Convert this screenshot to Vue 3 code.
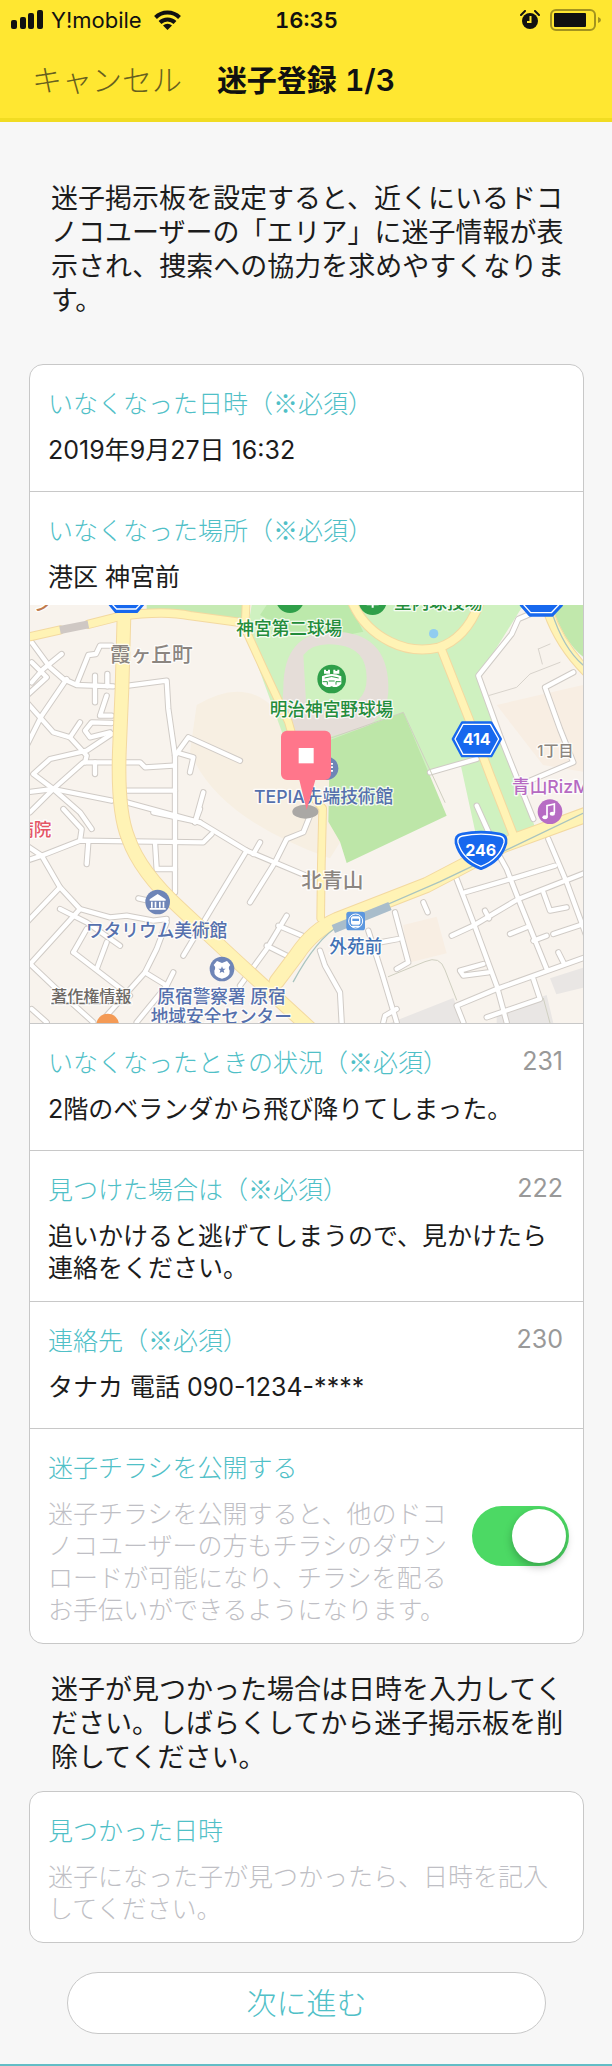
<template>
  <div class="page">
    <header class="header">
      <div class="status">
        <div class="status-left">
          <svg class="signal" viewBox="0 0 32 20">
            <rect x="0" y="10" width="6" height="9" rx="2" />
            <rect x="9" y="7" width="6" height="12" rx="2" />
            <rect x="17" y="3" width="6" height="16" rx="2" />
            <rect x="26" y="0" width="6" height="19" rx="2" />
          </svg>
          <span class="carrier">Y!mobile</span>
          <svg class="wifi" viewBox="0 0 27 20">
            <g fill="none" stroke="currentColor" stroke-width="4">
              <path d="M1.500 7.500a17 17 0 0 1 24 0" />
              <path d="M6 12.500a10.600 10.600 0 0 1 15 0" />
            </g>
            <path d="M13.500 20l-4.500-4.500a6.400 6.400 0 0 1 9 0z" />
          </svg>
        </div>
        <span class="time">16:35</span>
        <div class="status-right">
          <svg class="alarm" viewBox="0 0 20 20">
            <circle cx="10" cy="11" r="8" />
            <path d="M1 5l4-4M19 5l-4-4" fill="none" stroke="currentColor" stroke-width="2" stroke-linecap="round" />
            <path d="M10.500 6v6H7" fill="none" stroke="#ffe731" stroke-width="2" />
          </svg>
          <svg class="battery" viewBox="0 0 52 22">
            <rect x="1" y="1" width="44" height="20" rx="5" fill="none" stroke="#a3931f" stroke-width="2" />
            <rect x="4" y="4" width="32" height="14" rx="1" />
            <path d="M48 8q3 1 3 3t-3 3z" fill="#a3931f" />
          </svg>
        </div>
      </div>
      <nav class="nav">
        <button type="button" class="cancel">キャンセル</button>
        <h1 class="title">迷子登録 1/3</h1>
      </nav>
    </header>

    <form class="form" @submit.prevent>
      <p class="note intro">迷子掲示板を設定すると、近くにいるドコノコユーザーの「エリア」に迷子情報が表示され、捜索への協力を求めやすくなります。</p>

      <section class="card">
        <div class="row">
          <label class="label" for="lost-at">いなくなった日時（※必須）</label>
          <input id="lost-at" v-model="lostAt" class="field" type="text" />
        </div>

        <div class="row place">
          <label class="label" for="lost-place">いなくなった場所（※必須）</label>
          <input id="lost-place" v-model="lostPlace" class="field" type="text" />
        </div>

        <!-- Map -->
        <svg class="map" viewBox="0 0 1659 1254" preserveAspectRatio="xMidYMid slice">
          <rect width="1659" height="1254" fill="#f8f3ed" />
          <path d="M500 300Q700 180 800 420L1000 600L900 760Q560 640 480 440z" fill="#f7efe2" />
          <path d="M1120 960l100-25 30 110-120 30zM1400 300l259-60v260l-120-20z" fill="#f8eee3" />
          <path d="M1080 1254l190-75 30 75zM1560 1120l99-32v60l-80 20zM1400 1225l150-55 20 84h-170z" fill="#e9e6e4" />

          <!-- Parks -->
          <path d="M350 0H645V45L350 25z" fill="#c5eab3" />
          <path d="M665 0H1480L1345 215 1420 430 1525 690 1340 700 1290 470 1195 500 1150 500 1000 420 770 420 650 90z" fill="#cff1c0" />
          <path d="M690 30l20-30h250l40 80-100 20-120-20z" fill="#bce9ab" />
          <path d="M760 250Q760 80 910 80Q1070 80 1075 240Q1080 330 1000 370L800 420Q750 360 760 250z" fill="#e5ddd8" />
          <path d="M820 150Q850 110 925 120Q1010 130 1010 220Q1010 300 920 310L830 325z" fill="#cff1c0" />
          <path d="M900 405L1120 322 1250 632 950 774 930 710 895 650z" fill="#bde6a8" />
          <path d="M1565 0H1659V155Q1600 110 1565 0z" fill="#c1e8ac" />
          <path d="M1435 600L1470 600 1515 665 1455 685z" fill="#cff1c0" />
          <circle cx="1211" cy="86" r="14" fill="#91cdf0" />

          <g fill="none" stroke-linejoin="round" stroke-linecap="round">
            <!-- Streets: casing first, then the surface -->
            <g v-for="pass in streetPasses" :key="pass.color" :stroke="pass.color" :stroke-width="pass.width">
              <g v-for="tile in tiles" :key="tile.origin" :transform="`translate(${tile.origin})`">
                <polyline v-for="street in tile.streets" :key="street" :points="street" />
              </g>
            </g>
            <path d="M1375 272l85-25 40-40 90-35M1525 132l35-15M1525 132l12 45" stroke="#d8d3cc" stroke-width="3" />
            <path d="M1075 1115l110-45q45-20 60 25l35 90M1540 1180l20 74M900 400L1120 322l125 270" stroke="#cfcfc0" stroke-width="3" />

            <!-- Main roads -->
            <g v-for="pass in roadPasses" :key="pass.color" :stroke="pass.color">
              <path v-for="road in roads" :key="road.d" :d="road.d" :stroke-width="road.width + pass.extra" />
            </g>
            <path d="M90 75l85-17" stroke="#cfc8c4" stroke-width="24" stroke-linecap="butt" />
            <path d="M790 1130Q860 1000 930 960L1230 830 1659 625M1565 20Q1600 130 1659 180" stroke="#a9c4bf" stroke-width="4" />
            <path d="M910 972L1080 903" stroke="#a9bdcb" stroke-width="26" stroke-linecap="butt" />
          </g>

          <!-- Route signs -->
          <g fill="#1768ee" stroke="#1768ee" stroke-width="10" stroke-linejoin="round">
            <path d="M1297 354h86l28 48-28 50h-86l-27-50z" />
            <path d="M1295 688q58-12 116 0 20 3 16 26-15 54-74 76-60-22-74-76-4-23 16-26z" />
            <path d="M238-30h102v25l-20 24h-62l-20-24z" />
            <path d="M1474-30h120v30l-28 30h-66l-26-30z" />
          </g>
          <g fill="none" stroke="#fff" stroke-width="4" stroke-linejoin="round">
            <path d="M1299 358h82l25 44-25 46h-82l-24-46z" />
            <path d="M1297 693q56-11 112 0 16 3 13 20-14 50-69 71-55-21-69-71-3-17 13-20z" />
            <path d="M244-30v25l16 17h58l16-17v-25" />
            <path d="M1480-30v28l22 25h62l24-25v-28" />
          </g>
          <text class="route" x="1340" y="420">414</text>
          <text class="route" x="1352" y="752">246</text>

          <!-- Place icons -->
          <g fill="#2f9f49">
            <circle cx="905" cy="222" r="43" />
            <circle cx="780" cy="-18" r="42" />
            <circle cx="1028" cy="-12" r="42" />
          </g>
          <g fill="#fff">
            <path d="M876 214q29-14 58 0v22q-10 12-24 10-5-4-10 0-14 2-24-10z" />
            <path d="M882 194h6v4h6v-4h6v12h-18zM910 194h6v4h6v-4h6v12h-18z" />
          </g>
          <path d="M884 219q21-9 42 0M878 230h14v9M932 230h-14v9M896 228h18" fill="none" stroke="#2f9f49" stroke-width="3" />
          <path d="M1028-10v18M1010-2h36" stroke="#fff" stroke-width="6" />
          <g fill="#6e85b7">
            <circle cx="383" cy="891" r="37" />
            <circle cx="576" cy="1092" r="37" />
            <circle cx="890" cy="490" r="35" />
          </g>
          <g fill="#fff">
            <path d="M359 883l24-16 24 16v4h-48zM363 890h5v18h-5zM374 890h5v18h-5zM387 890h5v18h-5zM398 890h5v18h-5zM359 909h48v5h-48z" />
            <path d="M561 1068l15 6 15-6 10 12q-8 7-2 17 2 18-23 24-25-6-23-24 6-10-2-17z" />
            <path d="M895 474h14v5h-14zM895 484h14v5h-14zM895 495h14v5h-14z" />
          </g>
          <path d="M576 1084l3 7h8l-6 5 2 8-7-4-7 4 2-8-6-5h8z" fill="#6e85b7" />
          <circle cx="233" cy="1260" r="34" fill="#f49a55" />
          <rect x="949" y="920" width="56" height="56" rx="8" fill="#5c97df" />
          <circle cx="977" cy="948" r="21" fill="none" stroke="#fff" stroke-width="3" />
          <path d="M969 934h16q6 0 6 6v14q0 5-5 5h-18q-5 0-5-5v-14q0-6 6-6zM967 962h20l4 4h-28z" fill="#fff" />
          <path d="M967 941h20v7h-20z" fill="#5c97df" />
          <circle cx="1560" cy="620" r="37" fill="#b76cc4" />
          <path d="M1551 636v-34l22-5v27" fill="none" stroke="#fff" stroke-width="5" />
          <ellipse cx="1545" cy="637" rx="8" ry="6" fill="#fff" />
          <ellipse cx="1567" cy="626" rx="8" ry="6" fill="#fff" />

          <text
            v-for="place in places"
            :key="place.name"
            class="place-name"
            :class="place.kind"
            :x="place.x"
            :y="place.y"
          >{{ place.name }}</text>

          <!-- Pin -->
          <ellipse cx="826" cy="620" rx="39" ry="21" fill="#aaa8a5" />
          <path d="M771 377h114a18 18 0 0 1 18 18v112a18 18 0 0 1-18 18h-29l-26 90-22-90h-37a18 18 0 0 1-18-18V395a18 18 0 0 1 18-18z" fill="#ff768b" />
          <rect x="806" y="429" width="45" height="46" fill="#fff" />
        </svg>

        <div v-for="item in details" :key="item.id" class="row">
          <div class="row-head">
            <label class="label" :for="item.id">{{ item.label }}</label>
            <span class="count">{{ MAX_LENGTH - item.text.length }}</span>
          </div>
          <textarea :id="item.id" v-model="item.text" class="field" :rows="item.rows"></textarea>
        </div>

        <div class="row">
          <label class="label" for="publish">迷子チラシを公開する</label>
          <div class="publish">
            <p class="hint">迷子チラシを公開すると、他のドコノコユーザーの方もチラシのダウンロードが可能になり、チラシを配るお手伝いができるようになります。</p>
            <input id="publish" v-model="publish" class="switch" type="checkbox" role="switch" />
          </div>
        </div>
      </section>

      <p class="note outro">迷子が見つかった場合は日時を入力してください。しばらくしてから迷子掲示板を削除してください。</p>

      <section class="card">
        <div class="row">
          <label class="label" for="found-at">見つかった日時</label>
          <textarea
            id="found-at"
            v-model="foundAt"
            class="field"
            rows="2"
            placeholder="迷子になった子が見つかったら、日時を記入してください。"
          ></textarea>
        </div>
      </section>

      <button type="submit" class="next">次に進む</button>
    </form>
  </div>
</template>

<script setup>
import { ref } from "vue";

const MAX_LENGTH = 250;

const lostAt = ref("2019年9月27日 16:32");
const lostPlace = ref("港区 神宮前");
const foundAt = ref("");
const publish = ref(true);

const details = ref([
  { id: "situation", label: "いなくなったときの状況（※必須）", text: "2階のベランダから飛び降りてしまった。", rows: 1 },
  { id: "when-found", label: "見つけた場合は（※必須）", text: "追いかけると逃げてしまうので、見かけたら連絡をください。", rows: 2 },
  { id: "contact", label: "連絡先（※必須）", text: "タナカ 電話 090-1234-****", rows: 1 }
]);

const streetPasses = [
  { color: "#d0cbc6", width: 19 },
  { color: "#ffffff", width: 13 }
];

const roadPasses = [
  { color: "#f3d9a0", extra: 6 },
  { color: "#fff3b5", extra: 0 }
];

const roads = [
  { width: 22, d: "M0 95L90 75M175 58L270 34Q400 15 480 32L630 52" },
  { width: 38, d: "M282 30L276 250 268 440Q262 620 295 700Q330 800 450 910L600 1050 840 1270" },
  { width: 20, d: "M648 0L645 70 700 190 775 350 835 560 878 610 874 780 872 940" },
  { width: 24, d: "M966-10Q1000 70 1080 110Q1150 145 1225 128Q1310 100 1350-10" },
  { width: 22, d: "M1235 135L1320 350 1380 510 1450 690" },
  { width: 42, d: "M740 1130L800 1050Q850 975 920 945L1190 840 1420 720 1680 625" },
  { width: 26, d: "M1555 20Q1590 120 1670 200" }
];

// Street outlines, one list per map tile
const tiles = [
  {
    origin: "-30 -18",
    streets: [
      "20 110 90 205 130 240 170 258 280 262",
      "325 260 440 245 445 330 465 470 465 880",
      "275 140 240 140 228 165 205 168 170 255",
      "225 230 225 310",
      "262 225 262 262",
      "20 310 100 400 150 415 200 470 195 490",
      "20 440 65 350 140 240",
      "20 290 80 235 35 190",
      "125 165 70 210 35 250",
      "275 350 240 350 260 290",
      "275 372 215 370 195 395 210 415 270 400",
      "180 370 150 415",
      "275 405 200 455 90 480 40 525 100 570 275 605",
      "20 580 100 570 190 490 360 490 375 505 460 500",
      "225 490 225 525",
      "100 570 30 640",
      "100 570 180 640 215 690",
      "465 470 505 415 660 485",
      "475 462 520 475 510 520",
      "320 575 465 575",
      "320 610 540 670",
      "525 670 550 580"
    ]
  },
  {
    origin: "810 -18",
    streets: [
      "690 45 655 60 635 105 535 230 600 410 700 660",
      "820 220 735 265 780 390 820 490 690 545",
      "390 520 530 480",
      "530 620 575 720"
    ]
  },
  {
    origin: "-30 612",
    streets: [
      "20 155 65 140 180 95 550 100 575 75",
      "180 95 185 60 130 0",
      "20 110 65 140 120 235 20 340",
      "205 100 200 165",
      "405 100 410 180 465 180",
      "120 235 180 300 270 325 320 320 400 335 440 330",
      "120 300 200 340 300 410",
      "180 300 35 460",
      "20 455 120 550 220 640",
      "35 600 80 640",
      "160 430 330 560",
      "260 400 230 480",
      "160 430 200 360",
      "355 268 385 275",
      "440 340 410 420 375 490 260 620",
      "375 490 440 530 350 640",
      "440 530 460 490",
      "400 10 540 40 680 125 870 205",
      "540 0 525 40",
      "680 125 580 290 490 440",
      "720 100 700 135",
      "870 20 850 70 800 90 765 160 690 280",
      "740 410 830 455",
      "800 320 740 420 660 530",
      "775 350 870 390"
    ]
  },
  {
    origin: "810 612",
    streets: [
      "570 90 620 180 655 270 740 480",
      "470 210 520 340 590 530 620 640",
      "745 90 800 220 870 410",
      "495 250 650 205 765 170",
      "455 380 520 350 655 270 860 190",
      "555 305 567 328",
      "730 250 750 305 800 295",
      "630 375 680 355",
      "700 395 740 380",
      "760 375 850 345",
      "870 440 590 540 470 590 490 640",
      "550 465 480 485 490 500 565 490",
      "700 510 720 570 560 625",
      "775 430 790 460",
      "370 280 383 310",
      "285 310 325 460 290 480",
      "205 365 245 490 290 640",
      "240 400 295 390",
      "60 425 75 470 120 550 125 640",
      "290 600 255 620 250 640"
    ]
  }
];

const places = [
  { name: "霞ヶ丘町", x: 240, y: 170, kind: "district" },
  { name: "北青山", x: 814, y: 850, kind: "district" },
  { name: "1丁目", x: 1522, y: 454, kind: "block" },
  { name: "神宮第二球場", x: 619, y: 91, kind: "sport" },
  { name: "明治神宮野球場", x: 719, y: 333, kind: "sport" },
  { name: "室内球技場", x: 1092, y: 12, kind: "sport" },
  { name: "TEPIA先端技術館", x: 672, y: 594, kind: "culture" },
  { name: "ワタリウム美術館", x: 168, y: 995, kind: "culture" },
  { name: "原宿警察署 原宿", x: 382, y: 1195, kind: "culture" },
  { name: "地域安全センター", x: 362, y: 1255, kind: "culture" },
  { name: "外苑前", x: 898, y: 1044, kind: "station" },
  { name: "青山RizM", x: 1446, y: 564, kind: "music" },
  { name: "病院", x: -42, y: 694, kind: "hospital" },
  { name: "ン", x: 12, y: 18, kind: "food" },
  { name: "著作権情報", x: 64, y: 1190, kind: "legal" }
];
</script>

<style>
body {
  margin: 0;
  background: #f7f7f7;
}
</style>

<style scoped>
.page {
  border-bottom: 2px solid #62bdc6;
  background: #f7f7f7;
  color: #1c1c1c;
  font-family: Inter, "Noto Sans CJK JP", sans-serif;
  font-size: 25px;
  font-weight: 400;
  line-height: 32px;
}

/* Header */
.header {
  background: #ffe731;
  border-bottom: 4px solid #f1dc22;
  color: #111;
}
.status {
  display: grid;
  grid-template-columns: 1fr auto 1fr;
  align-items: center;
  height: 40px;
  padding: 0 10px 0 11px;
}
.status-left,
.status-right {
  display: flex;
  align-items: center;
}
.status-left {
  gap: 8px;
}
.status-right {
  justify-content: flex-end;
  gap: 10px;
}
.status svg {
  fill: currentColor;
}
.signal {
  width: 32px;
  height: 20px;
}
.carrier {
  font-size: 22px;
}
.wifi {
  width: 27px;
  height: 20px;
  margin-left: 4px;
}
.time {
  font-size: 22px;
  font-weight: 600;
  font-variant-numeric: tabular-nums;
}
.alarm {
  width: 20px;
  height: 20px;
}
.battery {
  width: 52px;
  height: 22px;
}
.nav {
  display: grid;
  grid-template-columns: 1fr auto 1fr;
  align-items: center;
  height: 76px;
  padding: 2px 32px 0;
}
.cancel {
  justify-self: start;
  padding: 0;
  border: none;
  background: transparent;
  color: #67601f;
  font: inherit;
  font-size: 30px;
  font-weight: 300;
  cursor: pointer;
}
.title {
  margin: 0;
  font-size: 30px;
  font-weight: 600;
  font-variant-numeric: tabular-nums;
}

/* Form */
.form {
  display: flex;
  flex-direction: column;
  padding: 60px 28px 30px 29px;
}
.note {
  margin: 0;
  padding: 0 16px 0 22px;
  font-size: 27px;
  line-height: 34px;
}
.intro {
  margin-bottom: 46px;
}
.outro {
  margin: 29px 0 16px;
}
.card {
  overflow: hidden;
  border: 1px solid #c8c8c8;
  border-radius: 14px;
  background: #fff;
}
.row {
  display: flex;
  flex-direction: column;
  gap: 16px;
  min-height: 88px;
  padding: 21px 20px 17px 18px;
}
.row + .row,
.map + .row {
  border-top: 1px solid #c8c8c8;
}
.place {
  min-height: 0;
  padding-bottom: 12px;
}
.row-head {
  display: flex;
  justify-content: space-between;
}
.label {
  color: #50c0c7;
  font-family: "Noto Sans CJK JP", sans-serif;
  font-weight: 300;
}
.count {
  color: #999;
}
.field {
  display: block;
  width: 100%;
  padding: 0;
  border: none;
  outline: none;
  resize: none;
  overflow: hidden;
  background: transparent;
  color: #1c1c1c;
  font: inherit;
  line-height: 32px;
}
input.field {
  height: 32px;
}
.field::placeholder {
  color: #bfbfc5;
  font-weight: 300;
  opacity: 1;
}
.publish {
  display: flex;
  align-items: center;
  justify-content: space-between;
  gap: 20px;
  margin-right: -6px;
}
.hint {
  flex: 1;
  margin: 0;
  color: #bfbfc5;
  font-weight: 300;
}
.switch {
  position: relative;
  flex: none;
  width: 97px;
  height: 60px;
  margin: 0 0 52px;
  appearance: none;
  border-radius: 30px;
  background: #e5e5ea;
  cursor: pointer;
}
.switch:checked {
  background: #4cd964;
}
.switch::before {
  content: "";
  position: absolute;
  top: 3px;
  left: 3px;
  width: 54px;
  height: 54px;
  border-radius: 50%;
  background: #fff;
  box-shadow: 0 4px 8px rgba(0, 0, 0, 0.25);
}
.switch:checked::before {
  left: 40px;
}
.next {
  height: 62px;
  margin: 29px 38px 0;
  border: 1px solid #c8c8c8;
  border-radius: 31px;
  background: #fff;
  color: #50c0c7;
  font: inherit;
  font-size: 30px;
  font-weight: 300;
  cursor: pointer;
}

/* Map */
.map {
  display: block;
  width: 100%;
}
.place-name {
  font-size: 53px;
  font-weight: 500;
  paint-order: stroke;
  stroke: #fff;
  stroke-width: 8px;
  stroke-opacity: 0.8;
  stroke-linejoin: round;
}
.district {
  fill: #8b8580;
  font-size: 62px;
}
.block {
  fill: #8b8580;
  font-size: 45px;
}
.sport {
  fill: #238c3b;
}
.culture {
  fill: #5570ad;
}
.station {
  fill: #4272b5;
}
.music {
  fill: #b66ac2;
}
.hospital {
  fill: #e45565;
}
.food {
  fill: #c07a4c;
}
.legal {
  fill: #6d6964;
  font-size: 48px;
  text-decoration: underline;
}
.route {
  fill: #fff;
  font-size: 48px;
  font-weight: 700;
  text-anchor: middle;
}
</style>
